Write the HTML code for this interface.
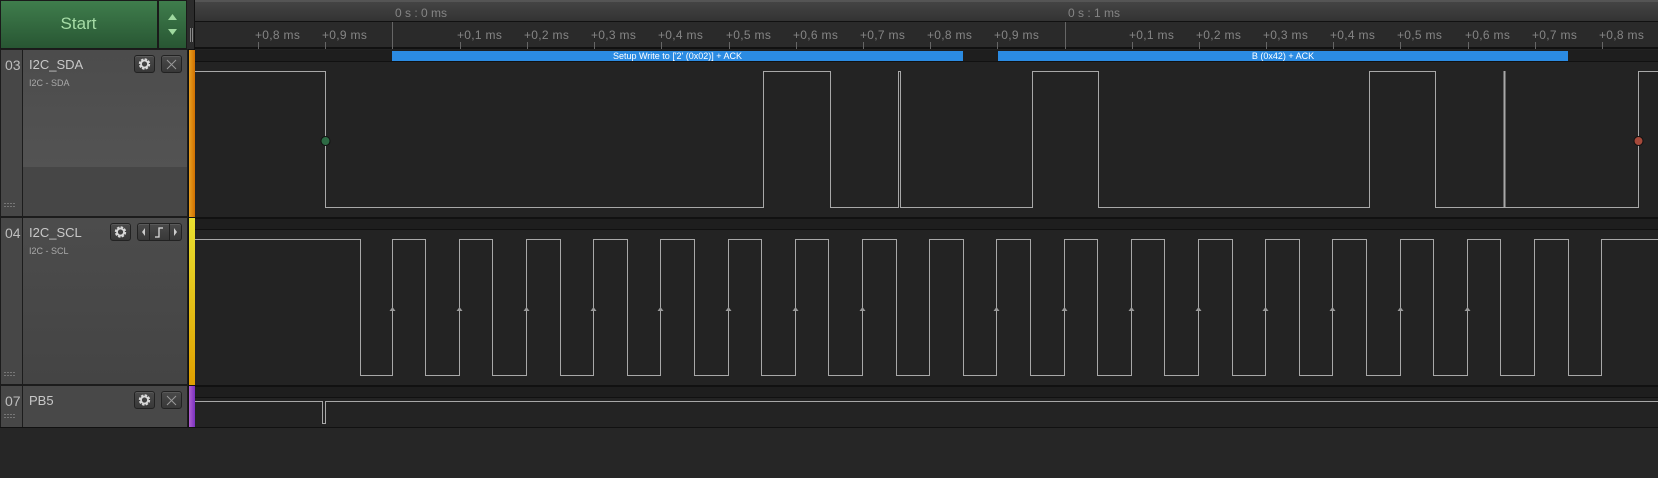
<!DOCTYPE html>
<html><head><style>
*{margin:0;padding:0;box-sizing:border-box}
body{width:1658px;height:478px;background:#262626;position:relative;overflow:hidden;font-family:"Liberation Sans",sans-serif}
.a{position:absolute}
.btn{position:absolute;border:1px solid #222;border-radius:3px;background:linear-gradient(#4a4a4a,#383838);box-shadow:inset 0 1px 0 #5a5a5a}
.num{color:#bdbdbd;font-size:14px}
.lbl{color:#c8c8c8;font-size:13px}
.sub{color:#a9a9a9;font-size:9px}
.tk{position:absolute;top:28px;color:#858585;font-size:12px;letter-spacing:.3px}
</style></head><body>
<div class="a" style="left:0;top:0;width:158px;height:49px;background:linear-gradient(#3f7d4c,#285633);border:1px solid #1a1a1a"></div>
<div class="a" style="left:0;top:14px;width:157px;text-align:center;color:#a6dca6;font-size:17px">Start</div>
<div class="a" style="left:158px;top:0;width:29px;height:49px;background:linear-gradient(#3f7d4c,#285633);border:1px solid #1a1a1a"></div>
<svg class="a" style="left:158px;top:0" width="29" height="49"><polygon points="10,20 19,20 14.5,14" fill="#9fd89f"/><polygon points="10,29 19,29 14.5,35" fill="#9fd89f"/></svg>
<div class="a" style="left:187px;top:0;width:8px;height:49px;background:#2c2c2c;border-right:1px solid #111"></div>
<div class="a" style="left:190px;top:28px;width:1px;height:14px;background:#888"></div>
<div class="a" style="left:192px;top:28px;width:1px;height:14px;background:#888"></div>
<div class="a" style="left:195px;top:0;width:1463px;height:22px;background:linear-gradient(#444,#333);border-top:2px solid #555;border-bottom:1px solid #111"></div>
<div class="a" style="left:195px;top:22px;width:1463px;height:27px;background:#2a2a2a;border-bottom:2px solid #111"></div>
<div class="a" style="left:395px;top:6px;color:#858585;font-size:12px">0 s : 0 ms</div>
<div class="a" style="left:1068px;top:6px;color:#858585;font-size:12px">0 s : 1 ms</div>
<div class="tk" style="left:255px">+0,8 ms</div><div class="tk" style="left:322px">+0,9 ms</div>
<div class="tk" style="left:457px">+0,1 ms</div><div class="tk" style="left:524px">+0,2 ms</div><div class="tk" style="left:591px">+0,3 ms</div><div class="tk" style="left:658px">+0,4 ms</div><div class="tk" style="left:726px">+0,5 ms</div><div class="tk" style="left:793px">+0,6 ms</div><div class="tk" style="left:860px">+0,7 ms</div><div class="tk" style="left:927px">+0,8 ms</div><div class="tk" style="left:994px">+0,9 ms</div>
<div class="tk" style="left:1129px">+0,1 ms</div><div class="tk" style="left:1196px">+0,2 ms</div><div class="tk" style="left:1263px">+0,3 ms</div><div class="tk" style="left:1330px">+0,4 ms</div><div class="tk" style="left:1397px">+0,5 ms</div><div class="tk" style="left:1465px">+0,6 ms</div><div class="tk" style="left:1532px">+0,7 ms</div><div class="tk" style="left:1599px">+0,8 ms</div>

<div class="a" style="left:0;top:49px;width:188px;height:379px;background:#1c1c1c"></div>
<div class="a" style="left:1px;top:50px;width:21px;height:166px;background:#474747"></div>
<div class="a" style="left:23px;top:50px;width:164px;height:117px;background:linear-gradient(#4c4c4c,#535353)"></div>
<div class="a" style="left:23px;top:167px;width:164px;height:49px;background:#464646"></div>
<div class="a num" style="left:5px;top:57px">03</div>
<div class="a lbl" style="left:29px;top:57px">I2C_SDA</div>
<div class="a sub" style="left:29px;top:78px">I2C - SDA</div>
<div class="a" style="left:1px;top:218px;width:21px;height:166px;background:#474747"></div>
<div class="a" style="left:23px;top:218px;width:164px;height:166px;background:linear-gradient(#4c4c4c,#444)"></div>
<div class="a num" style="left:5px;top:225px">04</div>
<div class="a lbl" style="left:29px;top:225px">I2C_SCL</div>
<div class="a sub" style="left:29px;top:246px">I2C - SCL</div>
<div class="a" style="left:1px;top:386px;width:21px;height:41px;background:#474747"></div>
<div class="a" style="left:23px;top:386px;width:164px;height:41px;background:#484848"></div>
<div class="a num" style="left:5px;top:393px">07</div>
<div class="a lbl" style="left:29px;top:393px">PB5</div>
<div class="btn" style="left:134px;top:55px;width:21px;height:18px"></div>
<div class="btn" style="left:161px;top:55px;width:21px;height:18px"></div>
<div class="btn" style="left:110px;top:223px;width:21px;height:18px"></div>
<div class="btn" style="left:137px;top:223px;width:45px;height:18px"></div>
<div class="btn" style="left:134px;top:391px;width:21px;height:18px"></div>
<div class="btn" style="left:161px;top:391px;width:21px;height:18px"></div>
<svg class="a" style="left:0;top:0" width="195" height="478">
<defs><g id="gear"><circle r="4.2" fill="none" stroke="#d8d8d8" stroke-width="3" stroke-dasharray="2.2 1.1"/><circle r="3.5" fill="none" stroke="#d8d8d8" stroke-width="1.8"/></g></defs>
<use href="#gear" x="144.5" y="64"/><use href="#gear" x="120.5" y="232"/><use href="#gear" x="144.5" y="400"/>
<path d="M167,60 L176,69 M176,60 L167,69 M167,396 L176,405 M176,396 L167,405" stroke="#999" stroke-width="1"/>
<path d="M149.5,224 V240 M169.5,224 V240" stroke="#222"/>
<polygon points="145,228 145,236 142,232" fill="#ccc"/><polygon points="174,228 174,236 177,232" fill="#ccc"/>
<path d="M155,237 H159 V228 H163" stroke="#ddd" fill="none" stroke-width="1.3"/>
<g fill="#777"><rect x="4" y="203" width="2" height="1"/><rect x="7" y="203" width="2" height="1"/><rect x="10" y="203" width="2" height="1"/><rect x="13" y="203" width="2" height="1"/><rect x="4" y="206" width="2" height="1"/><rect x="7" y="206" width="2" height="1"/><rect x="10" y="206" width="2" height="1"/><rect x="13" y="206" width="2" height="1"/>
<rect x="4" y="372" width="2" height="1"/><rect x="7" y="372" width="2" height="1"/><rect x="10" y="372" width="2" height="1"/><rect x="13" y="372" width="2" height="1"/><rect x="4" y="375" width="2" height="1"/><rect x="7" y="375" width="2" height="1"/><rect x="10" y="375" width="2" height="1"/><rect x="13" y="375" width="2" height="1"/>
<rect x="4" y="414" width="2" height="1"/><rect x="7" y="414" width="2" height="1"/><rect x="10" y="414" width="2" height="1"/><rect x="13" y="414" width="2" height="1"/><rect x="4" y="417" width="2" height="1"/><rect x="7" y="417" width="2" height="1"/><rect x="10" y="417" width="2" height="1"/><rect x="13" y="417" width="2" height="1"/></g>
</svg>
<div class="a" style="left:188px;top:49px;width:7px;height:379px;background:#111"></div>
<div class="a" style="left:189px;top:50px;width:6px;height:167px;background:linear-gradient(90deg,#e8a020,#d07000)"></div>
<div class="a" style="left:189px;top:218px;width:6px;height:167px;background:linear-gradient(#e8e030,#e0a000)"></div>
<div class="a" style="left:189px;top:386px;width:6px;height:41px;background:linear-gradient(90deg,#b060d0,#7a30c0)"></div>

<div class="a" style="left:195px;top:49px;width:1463px;height:379px;background:#232323"></div>
<div class="a" style="left:195px;top:50px;width:1463px;height:12px;background:#1e1e1e;border-bottom:1px solid #111"></div>
<div class="a" style="left:195px;top:217px;width:1463px;height:2px;background:#111"></div>
<div class="a" style="left:195px;top:219px;width:1463px;height:11px;background:#1e1e1e;border-bottom:1px solid #111"></div>
<div class="a" style="left:195px;top:385px;width:1463px;height:2px;background:#111"></div>
<div class="a" style="left:195px;top:387px;width:1463px;height:11px;background:#1e1e1e;border-bottom:1px solid #111"></div>
<div class="a" style="left:0;top:427px;width:1658px;height:1px;background:#111"></div>
<div class="a" style="left:392px;top:51px;width:571px;height:10px;background:#2b8be2;color:#fff;font-size:9px;line-height:10px;text-align:center">Setup Write to ['2' (0x02)] + ACK</div>
<div class="a" style="left:998px;top:51px;width:570px;height:10px;background:#2b8be2;color:#fff;font-size:9px;line-height:10px;text-align:center">B (0x42) + ACK</div>
<svg class="a" style="left:0;top:0" width="1658" height="478">
<g stroke="#666" stroke-width="1">
<path d="M392.5,22 V49 M1065.5,22 V49 M258.5,42 V49 M325.5,42 V49 M460.5,42 V49 M527.5,42 V49 M594.5,42 V49 M661.5,42 V49 M729.5,42 V49 M796.5,42 V49 M863.5,42 V49 M930.5,42 V49 M997.5,42 V49 M1132.5,42 V49 M1199.5,42 V49 M1266.5,42 V49 M1333.5,42 V49 M1400.5,42 V49 M1468.5,42 V49 M1535.5,42 V49 M1602.5,42 V49"/>
</g>
<g fill="none" stroke="#a8a8a8" stroke-width="1">
<path d="M195,71.5 H325.5 V207.5 H763.5 V71.5 H830.5 V207.5 H898.5 V71.5 H900.5 V207.5 H1032.5 V71.5 H1098.5 V207.5 H1369.5 V71.5 H1435.5 V207.5 H1504 V71.5 H1505 V207.5 H1638.5 V71.5 H1658"/>
<path d="M195,239.5 H360.5 V375.5 H392.5 V239.5 H425.5 V375.5 H459.5 V239.5 H492.5 V375.5 H526.5 V239.5 H560.5 V375.5 H593.5 V239.5 H627.5 V375.5 H660.5 V239.5 H694.5 V375.5 H728.5 V239.5 H761.5 V375.5 H795.5 V239.5 H828.5 V375.5 H862.5 V239.5 H896.5 V375.5 H929.5 V239.5 H963.5 V375.5 H996.5 V239.5 H1030.5 V375.5 H1064.5 V239.5 H1097.5 V375.5 H1131.5 V239.5 H1164.5 V375.5 H1198.5 V239.5 H1232.5 V375.5 H1265.5 V239.5 H1299.5 V375.5 H1332.5 V239.5 H1366.5 V375.5 H1400.5 V239.5 H1433.5 V375.5 H1467.5 V239.5 H1500.5 V375.5 H1534.5 V239.5 H1568.5 V375.5 H1601.5 V239.5 H1658"/>
<path d="M195,401.5 H322.5 V423.5 H325.5 V401.5 H1658"/>
</g>
<g fill="#999">
<polygon points="389.5,311 395.5,311 392.5,307"/><polygon points="456.5,311 462.5,311 459.5,307"/><polygon points="523.5,311 529.5,311 526.5,307"/><polygon points="590.5,311 596.5,311 593.5,307"/><polygon points="657.5,311 663.5,311 660.5,307"/><polygon points="725.5,311 731.5,311 728.5,307"/><polygon points="792.5,311 798.5,311 795.5,307"/><polygon points="859.5,311 865.5,311 862.5,307"/><polygon points="993.5,311 999.5,311 996.5,307"/><polygon points="1061.5,311 1067.5,311 1064.5,307"/><polygon points="1128.5,311 1134.5,311 1131.5,307"/><polygon points="1195.5,311 1201.5,311 1198.5,307"/><polygon points="1262.5,311 1268.5,311 1265.5,307"/><polygon points="1329.5,311 1335.5,311 1332.5,307"/><polygon points="1397.5,311 1403.5,311 1400.5,307"/><polygon points="1464.5,311 1470.5,311 1467.5,307"/>
</g>
<circle cx="325.5" cy="141" r="4.5" fill="#2d6a44" stroke="#111"/>
<circle cx="1638.5" cy="141" r="4.5" fill="#a5493a" stroke="#111"/>
</svg>
</body></html>
